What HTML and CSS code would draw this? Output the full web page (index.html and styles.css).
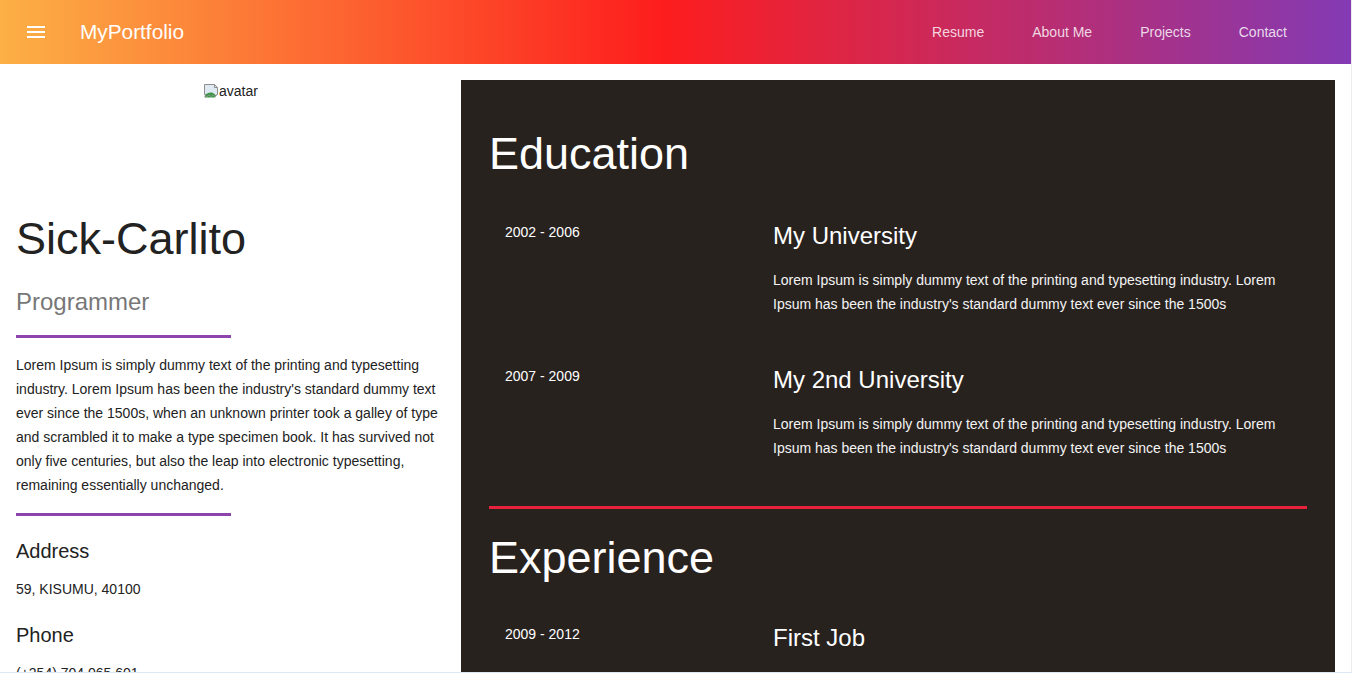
FILE: index.html
```html
<!DOCTYPE html>
<html lang="en">
<head>
<meta charset="utf-8">
<title>MyPortfolio</title>
<link rel="stylesheet" href="styles.css">
</head>
<body>
<div class="app">
  <header class="toolbar">
    <button class="menu-btn" aria-label="menu">
      <svg width="24" height="24" viewBox="0 0 24 24"><path d="M3 18h18v-2H3v2zm0-5h18v-2H3v2zm0-7v2h18V6H3z" fill="#fff"/></svg>
    </button>
    <span class="brand">MyPortfolio</span>
    <nav class="nav">
      <a href="#">Resume</a>
      <a href="#">About Me</a>
      <a href="#">Projects</a>
      <a href="#">Contact</a>
    </nav>
  </header>

  <main class="content">
    <aside class="profile">
      <div class="avatar">
        <span class="broken">
          <svg width="16" height="16" viewBox="0 0 16 16"><path d="M1.5 1.5h10l3 3v7l-2 1-2-1.5-2 1.5-2-1.5-2 1.5-3-1z" fill="#dfe9f4" stroke="#8f8f8f"/><path d="M11.5 1.5v3h3" fill="none" stroke="#8f8f8f"/><path d="M2 14.5V12c2-2 5-3 8-2l3 2.5-1 2z" fill="#3a9a45"/><path d="M2 14.5v-2l2 1 2-1.5 2 1.5 2-1.5 2 1.5 1.5-1" fill="none" stroke="#8f8f8f"/></svg>avatar</span>
      </div>
      <h1 class="name">Sick-Carlito</h1>
      <h2 class="role">Programmer</h2>
      <div class="bar"></div>
      <p class="bio">Lorem Ipsum is simply dummy text of the printing and typesetting industry. Lorem Ipsum has been the industry's standard dummy text ever since the 1500s, when an unknown printer took a galley of type and scrambled it to make a type specimen book. It has survived not only five centuries, but also the leap into electronic typesetting, remaining essentially unchanged.</p>
      <div class="bar bar-2"></div>
      <h3 class="label">Address</h3>
      <p class="value">59, KISUMU, 40100</p>
      <h3 class="label label-next">Phone</h3>
      <p class="value">(+254) 704 065 601</p>
    </aside>

    <section class="resume">
      <h2 class="section-title">Education</h2>
      <div class="rows">
        <div class="row">
          <div class="date">2002 - 2006</div>
          <div class="detail">
            <h3 class="item-title">My University</h3>
            <p class="item-text">Lorem Ipsum is simply dummy text of the printing and typesetting industry. Lorem Ipsum has been the industry's standard dummy text ever since the 1500s</p>
          </div>
        </div>
        <div class="row">
          <div class="date">2007 - 2009</div>
          <div class="detail">
            <h3 class="item-title">My 2nd University</h3>
            <p class="item-text">Lorem Ipsum is simply dummy text of the printing and typesetting industry. Lorem Ipsum has been the industry's standard dummy text ever since the 1500s</p>
          </div>
        </div>
      </div>
      <div class="divider"></div>
      <h2 class="section-title section-next">Experience</h2>
      <div class="rows">
        <div class="row">
          <div class="date">2009 - 2012</div>
          <div class="detail">
            <h3 class="item-title">First Job</h3>
            <p class="item-text">Lorem Ipsum is simply dummy text of the printing and typesetting industry. Lorem Ipsum has been the industry's standard dummy text ever since the 1500s</p>
          </div>
        </div>
      </div>
    </section>
  </main>
</div>
</body>
</html>
```

FILE: styles.css
```css
* { box-sizing: border-box; }

html, body {
  margin: 0;
  padding: 0;
  height: 100%;
  overflow: hidden;
  background: #fff;
}

body {
  font-family: "Liberation Sans", Arial, Helvetica, sans-serif;
  color: #222;
}

.app {
  height: 673px;
  overflow: hidden;
  border-right: 1px solid #ececec;
  border-bottom: 1px solid #dce8f4;
}

/* toolbar */
.toolbar {
  height: 64px;
  display: flex;
  align-items: center;
  padding: 0 16px;
  background: linear-gradient(to right, #fcb045 0%, #fd1d1d 49%, #833ab4 100%);
  color: #fff;
}

.menu-btn {
  width: 40px;
  height: 40px;
  padding: 0;
  margin: 0;
  border: 0;
  background: transparent;
  display: flex;
  align-items: center;
  justify-content: center;
}

.menu-btn svg { display: block; }

.brand {
  margin-left: 24px;
  font-size: 20.8px;
  line-height: 32px;
}

.nav {
  margin-left: auto;
  margin-right: 24px;
  display: flex;
}

.nav a {
  padding: 0 24px;
  font-size: 14px;
  line-height: 36px;
  color: rgba(255, 255, 255, 0.82);
  text-decoration: none;
}

/* content */
.content {
  display: flex;
  align-items: flex-start;
}

.profile {
  width: 461px;
  flex: none;
  padding: 16px 16px 0;
}

.avatar {
  height: 120px;
  text-align: center;
  padding-top: 1px;
  font-size: 14px;
  line-height: 20px;
}

.broken {
  display: inline-flex;
  align-items: center;
}

.broken svg { margin-right: 0; }

.name {
  margin: 15px 0 0;
  font-size: 45px;
  line-height: 48px;
  font-weight: 400;
  color: #222;
}

.role {
  margin: 23px 0 0;
  font-size: 24px;
  line-height: 32px;
  font-weight: 400;
  color: #777;
}

.bar {
  width: 50%;
  height: 3px;
  margin-top: 17px;
  background: #8e44ad;
}

.bar-2 { margin-top: 16px; }

.bio {
  margin: 15px 0 0;
  font-size: 14px;
  line-height: 24px;
  color: #222;
}

.label {
  margin: 19px 0 0;
  font-size: 20px;
  line-height: 32px;
  font-weight: 400;
  color: #222;
}

.label-next { margin-top: 18px; }

.value {
  margin: 10px 0 0;
  font-size: 14px;
  line-height: 24px;
  color: #222;
}

/* resume panel */
.resume {
  flex: 1;
  margin: 16px 16px 0 0;
  min-height: 700px;
  padding: 50px 28px 0;
  background: #28221f;
  color: #fff;
}

.section-title {
  margin: 0 0 42px;
  font-size: 45px;
  line-height: 48px;
  font-weight: 400;
  color: #fff;
}

.section-next { margin: 25px 0 40px; }

.rows {
  display: flex;
  flex-direction: column;
  gap: 48px;
}

.row {
  display: grid;
  grid-template-columns: 268px 1fr;
}

.date {
  padding: 0 16px;
  font-size: 14px;
  line-height: 24px;
}

.detail {
  padding: 0 16px;
}

.item-title {
  margin: 0 0 16px;
  font-size: 24px;
  line-height: 32px;
  font-weight: 400;
}

.item-text {
  margin: 0;
  font-size: 14px;
  line-height: 24px;
  color: #f4f4f4;
}

.divider {
  height: 3px;
  margin-top: 46px;
  background: #e8213d;
}
```
